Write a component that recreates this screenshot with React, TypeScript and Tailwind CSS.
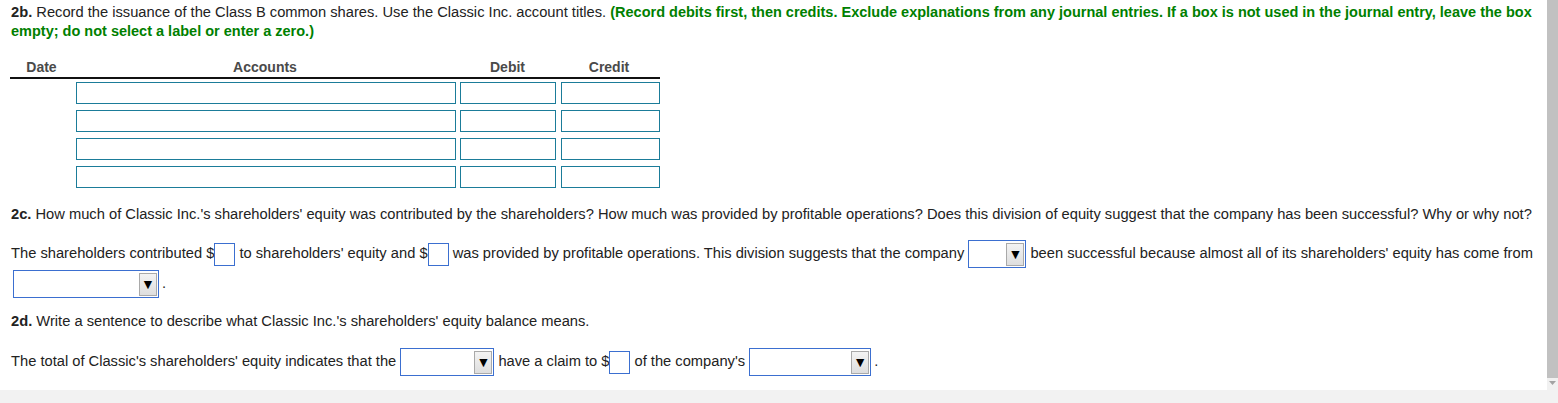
import React from 'react';

const font = "font-['Liberation_Sans',Arial,sans-serif]";

const Blank = () => (
  <span className="inline-block w-[21px] h-[23px] border border-[#3b6fd0] bg-white align-middle"></span>
);

const Select = ({ width }: { width: string }) => (
  <span className={`inline-flex ${width} h-[28px] border border-[#3b6fd0] bg-white align-middle justify-end items-center pr-[1px]`}>
    <span className="flex w-[18px] h-[23px] items-center justify-center border border-[#a9a9a9] bg-[linear-gradient(#f3f3f3,#dedede)] text-[14px] leading-none text-black">
      ▼
    </span>
  </span>
);

const JournalRow = () => (
  <div className="flex h-[28px] items-center">
    <div className="w-[66px]"></div>
    <div className="w-[380px] h-[22px] border border-[#1b7c99] bg-white"></div>
    <div className="w-[96px] h-[22px] border border-[#1b7c99] bg-white ml-[4px]"></div>
    <div className="w-[99px] h-[22px] border border-[#1b7c99] bg-white ml-[5px]"></div>
  </div>
);

export default function App() {
  return (
    <div className={`${font} w-full h-screen flex flex-col bg-white text-[14.7px] text-[#222] overflow-hidden`}>
      <div className="flex h-[390px]">
        <div className="flex-1 min-w-0 overflow-hidden pl-[11px] pt-[3px]">
          {/* 2b */}
          <p className="leading-[19px] whitespace-nowrap">
            <b>2b.</b> Record the issuance of the Class B common shares. Use the Classic Inc. account titles.{' '}
            <b className="text-[#008000] text-[14.5px]">
              (Record debits first, then credits. Exclude explanations from any journal entries. If a box is not used in the journal entry, leave the box
            </b>
            <br />
            <b className="text-[#008000] text-[14.5px]">empty; do not select a label or enter a zero.)</b>
          </p>

          <div className="w-[650px] mt-[18px] -ml-[1px]">
            <div className="flex h-[20px] items-start border-b-2 border-[#111] text-[14px] leading-[16px] font-bold text-[#4a4a4a]">
              <div className="w-[63px] text-center">Date</div>
              <div className="w-[384px] text-center">Accounts</div>
              <div className="w-[101px] text-center">Debit</div>
              <div className="w-[102px] text-center">Credit</div>
            </div>
            <JournalRow />
            <JournalRow />
            <JournalRow />
            <JournalRow />
          </div>

          {/* 2c */}
          <p className="leading-[19px] mt-[14px] whitespace-nowrap">
            <b>2c.</b> How much of Classic Inc.'s shareholders' equity was contributed by the shareholders? How much was provided by profitable operations? Does this division of equity suggest that the company has been successful? Why or why not?
          </p>
          <p className="leading-[30px] mt-[14px] whitespace-nowrap">
            The shareholders contributed $<Blank /> to shareholders' equity and $<Blank /> was provided by profitable operations. This division suggests that the company{' '}
            <Select width="w-[58px]" /> been successful because almost all of its shareholders' equity has come from
            <br />
            <span className="ml-[2px]">
              <Select width="w-[146px]" />
            </span>
            <span className="ml-[3px]">.</span>
          </p>

          {/* 2d */}
          <p className="leading-[19px] mt-[14px] whitespace-nowrap">
            <b>2d.</b> Write a sentence to describe what Classic Inc.'s shareholders' equity balance means.
          </p>
          <p className="leading-[30px] mt-[15px] whitespace-nowrap">
            The total of Classic's shareholders' equity indicates that the <Select width="w-[94px]" /> have a claim to $<Blank /> of the company's{' '}
            <Select width="w-[122px]" />
            <span className="ml-[3px]">.</span>
          </p>
        </div>
        <div className="w-[11px] shrink-0 flex flex-col bg-[#f1f1f1]">
          <div className="w-[11px] h-[378px] bg-[#c1c1c1]"></div>
          <div className="flex-1 flex justify-center pt-[3px]">
            <svg width="7" height="5" viewBox="0 0 7 5">
              <path d="M0 0 L7 0 L3.5 4 Z" fill="#a3a3a3" />
            </svg>
          </div>
        </div>
      </div>
      <div className="h-[13px] bg-[#f2f2f2]"></div>
    </div>
  );
}
